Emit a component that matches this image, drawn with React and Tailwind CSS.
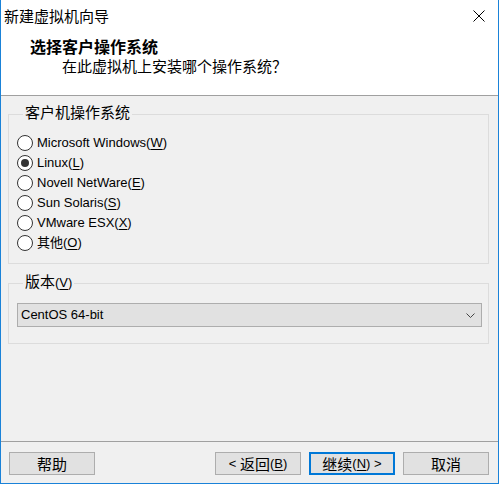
import React from "react";

const LAT = "font-['Liberation_Sans','Noto_Sans_CJK_SC',sans-serif]";
const CJK = "font-['Noto_Sans_CJK_SC',sans-serif]";

function U({ children }) {
  return <span className="underline underline-offset-[2px]">{children}</span>;
}

function Radio({ checked, children }) {
  return (
    <div className="flex items-center h-[20px]">
      <span className="w-[16px] h-[16px] rounded-full border border-[#333333] bg-white flex items-center justify-center shrink-0">
        {checked && <span className="w-[8px] h-[8px] rounded-full bg-[#333333]" />}
      </span>
      <span className={`ml-[4px] text-[13px] leading-[20px] text-black ${LAT}`}>{children}</span>
    </div>
  );
}

function Btn({ children, primary }) {
  return (
    <div
      className={`w-[86px] h-[23px] flex items-center justify-center bg-[#e1e1e1] text-black ${LAT} ${
        primary ? "border-2 border-[#0078d7]" : "border border-[#adadad]"
      }`}
    >
      {children}
    </div>
  );
}

export default function App() {
  return (
    <div className="w-[501px] h-[485px] bg-white">
      <div className={`w-[499px] h-[484px] border-x border-b border-[#1a82d8] flex flex-col bg-[#f0f0f0] text-black ${LAT}`}>
        {/* Header */}
        <div className="h-[96px] bg-white border-b border-[#a0a0a0] flex flex-col">
          <div className="h-[31px] flex items-center justify-between pl-[3px] pr-[13px]">
            <span className={`text-[15px] leading-[20px] ${CJK}`}>新建虚拟机向导</span>
            <svg width="12" height="12" viewBox="0 0 12 12">
              <line x1="0.5" y1="0.5" x2="11.5" y2="11.5" stroke="#000" strokeWidth="1" />
              <line x1="11.5" y1="0.5" x2="0.5" y2="11.5" stroke="#000" strokeWidth="1" />
            </svg>
          </div>
          <div className={`mt-[5px] pl-[29px] text-[16px] leading-[20px] font-bold ${CJK}`}>选择客户操作系统</div>
          <div className={`pl-[61px] text-[15px] leading-[20px] ${CJK}`}>在此虚拟机上安装哪个操作系统？</div>
        </div>

        {/* Body */}
        <div className="flex-1 flex flex-col">
          <fieldset className="mt-[6px] ml-[7px] w-[481px] border border-[#dcdcdc] pl-[8px] pt-[7px] pb-[10px]">
            <legend className={`ml-[6px] px-[2px] pb-[4px] text-[15px] leading-[20px] ${CJK}`}>客户机操作系统</legend>
            <Radio>
              Microsoft Windows(<U>W</U>)
            </Radio>
            <Radio checked>
              Linux(<U>L</U>)
            </Radio>
            <Radio>
              Novell NetWare(<U>E</U>)
            </Radio>
            <Radio>
              Sun Solaris(<U>S</U>)
            </Radio>
            <Radio>
              VMware ESX(<U>X</U>)
            </Radio>
            <Radio>
              其他(<U>O</U>)
            </Radio>
          </fieldset>

          <fieldset className="mt-[7px] ml-[7px] w-[481px] border border-[#dcdcdc] pl-[8px] pt-[8px] pb-[16px]">
            <legend className="ml-[6px] px-[2px] pb-[2px] leading-[20px]">
              <span className={`text-[15px] ${CJK}`}>版本</span>
              <span className="text-[13px]">
                (<U>V</U>)
              </span>
            </legend>
            <div className="w-[465px] h-[24px] bg-[#e1e1e1] border border-[#adadad] flex items-center justify-between pl-[3px] pr-[6px]">
              <span className="text-[13px] leading-[20px]">CentOS 64-bit</span>
              <svg width="9" height="5" viewBox="0 0 9 5">
                <polyline points="0.5,0.5 4.5,4.5 8.5,0.5" fill="none" stroke="#444" strokeWidth="1" />
              </svg>
            </div>
          </fieldset>
        </div>

        {/* Footer */}
        <div className="h-[42px] border-t border-[#a0a0a0] flex items-start pt-[10px] pl-[8px] pr-[9px]">
          <Btn>
            <span className={`text-[15px] leading-[20px] ${CJK}`}>帮助</span>
          </Btn>
          <div className="flex-1" />
          <div className="flex gap-[8px]">
            <Btn>
              <span className="text-[13px] leading-[20px]">&lt;&nbsp;</span>
              <span className={`text-[15px] leading-[20px] ${CJK}`}>返回</span>
              <span className="text-[13px] leading-[20px]">
                (<U>B</U>)
              </span>
            </Btn>
            <Btn primary>
              <span className={`text-[15px] leading-[20px] ${CJK}`}>继续</span>
              <span className="text-[13px] leading-[20px]">
                (<U>N</U>)&nbsp;&gt;
              </span>
            </Btn>
            <Btn>
              <span className={`text-[15px] leading-[20px] ${CJK}`}>取消</span>
            </Btn>
          </div>
        </div>
      </div>
    </div>
  );
}
